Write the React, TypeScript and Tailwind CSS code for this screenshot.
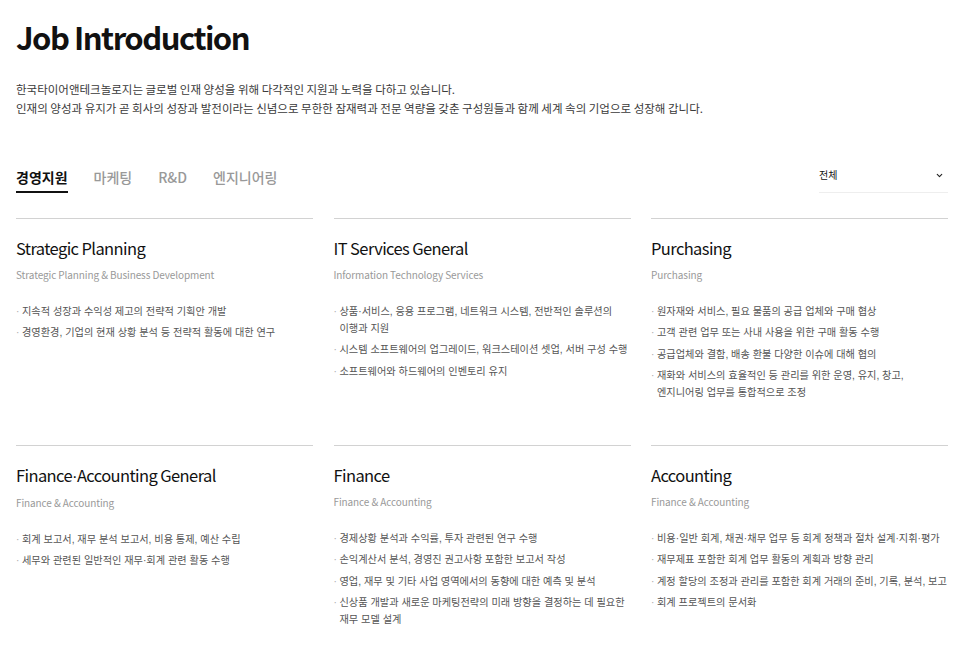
import { ChevronDown } from 'lucide-react';

const tabs = ['경영지원', '마케팅', 'R&D', '엔지니어링'];

const jobs = [
    {
        title: 'Strategic Planning',
        sub: 'Strategic Planning & Business Development',
        items: ['지속적 성장과 수익성 제고의 전략적 기획안 개발', '경영환경, 기업의 현재 상황 분석 등 전략적 활동에 대한 연구'],
    },
    {
        title: 'IT Services General',
        sub: 'Information Technology Services',
        items: [
            '상품·서비스, 응용 프로그램, 네트워크 시스템, 전반적인 솔루션의 이행과 지원',
            '시스템 소프트웨어의 업그레이드, 워크스테이션 셋업, 서버 구성 수행',
            '소프트웨어와 하드웨어의 인벤토리 유지',
        ],
    },
    {
        title: 'Purchasing',
        sub: 'Purchasing',
        items: [
            '원자재와 서비스, 필요 물품의 공급 업체와 구매 협상',
            '고객 관련 업무 또는 사내 사용을 위한 구매 활동 수행',
            '공급업체와 결함, 배송 환불 다양한 이슈에 대해 협의',
            '재화와 서비스의 효율적인 등 관리를 위한 운영, 유지, 창고, 엔지니어링 업무를 통합적으로 조정',
        ],
    },
    {
        title: 'Finance·Accounting General',
        sub: 'Finance & Accounting',
        items: ['회계 보고서, 재무 분석 보고서, 비용 통제, 예산 수립', '세무와 관련된 일반적인 재무·회계 관련 활동 수행'],
    },
    {
        title: 'Finance',
        sub: 'Finance & Accounting',
        items: [
            '경제상황 분석과 수익률, 투자 관련된 연구 수행',
            '손익계산서 분석, 경영진 권고사항 포함한 보고서 작성',
            '영업, 재무 및 기타 사업 영역에서의 동향에 대한 예측 및 분석',
            '신상품 개발과 새로운 마케팅전략의 미래 방향을 결정하는 데 필요한 재무 모델 설계',
        ],
    },
    {
        title: 'Accounting',
        sub: 'Finance & Accounting',
        items: [
            '비용·일반 회계, 채권·채무 업무 등 회계 정책과 절차 설계·지휘·평가',
            '재무제표 포함한 회계 업무 활동의 계획과 방향 관리',
            '계정 할당의 조정과 관리를 포함한 회계 거래의 준비, 기록, 분석, 보고',
            '회계 프로젝트의 문서화',
        ],
    },
];

// CJK font has a wide middle dot, so titles get a narrow one
function Title({ text }: { text: string }) {
    const [a, b] = text.split('·');
    if (b === undefined) return <>{text}</>;
    return (
        <>
            {a}
            <span className="font-['Liberation_Sans']">·</span>
            {b}
        </>
    );
}

export default function App() {
    return (
        <div className="min-h-screen bg-white pl-4 font-['Noto_Sans_CJK_KR',sans-serif]">
            <div className="w-[932px]">
                <h1 className="pt-[17px] text-[31px] font-bold leading-[40px] tracking-[-1.5px] text-[#111]">Job Introduction</h1>
                <p className="mt-[22.5px] text-[11.5px] leading-[19px] text-[#3a3a3a]">
                    한국타이어앤테크놀로지는 글로벌 인재 양성을 위해 다각적인 지원과 노력을 다하고 있습니다.
                    <br />
                    인재의 양성과 유지가 곧 회사의 성장과 발전이라는 신념으로 무한한 잠재력과 전문 역량을 갖춘 구성원들과 함께 세계 속의 기업으로 성장해 갑니다.
                </p>

                <div className="mt-[50.5px] flex items-end justify-between">
                    <div className="flex gap-[26px]">
                        {tabs.map((tab, i) => (
                            <div
                                key={tab}
                                className={
                                    i === 0
                                        ? 'border-b-2 border-[#111] pb-[5px] text-[14px] font-bold leading-[18px] text-[#111]'
                                        : 'border-b-2 border-transparent pb-[5px] text-[14px] font-medium leading-[18px] text-[#999]'
                                }
                            >
                                {tab}
                            </div>
                        ))}
                    </div>
                    <div className="flex w-[129px] items-center justify-between border-b border-[#eee] pb-[10px] pr-[4px]">
                        <span className="text-[10px] leading-[14px] text-[#111]">전체</span>
                        <ChevronDown className="h-[9px] w-[9px] text-[#222]" strokeWidth={3} />
                    </div>
                </div>

                <div className="mt-[25px] grid grid-cols-3 gap-x-[20.5px]">
                    {jobs.map((job) => (
                        <div key={job.title} className="border-t border-[#d2d2d2] pb-[44px] pt-[18px]">
                            <h3 className="text-[16.5px] leading-[22px] tracking-[-0.6px] text-[#111]">
                                <Title text={job.title} />
                            </h3>
                            <p className="mt-[7.5px] text-[10px] leading-[15px] tracking-[-0.1px] text-[#999]">{job.sub}</p>
                            {/* Liberation first so the middle dots and commas stay narrow */}
                            <ul className="mt-[21px] flex flex-col gap-[4.5px] font-['Liberation_Sans','Noto_Sans_CJK_KR',sans-serif]">
                                {job.items.map((item) => (
                                    <li key={item} className="break-keep pl-[6px] -indent-[6px] text-[10.2px] leading-[17px] text-[#555]">
                                        <span className="inline-block w-[6px] indent-0 text-[#aaa]">·</span>
                                        {item}
                                    </li>
                                ))}
                            </ul>
                        </div>
                    ))}
                </div>
            </div>
        </div>
    );
}
